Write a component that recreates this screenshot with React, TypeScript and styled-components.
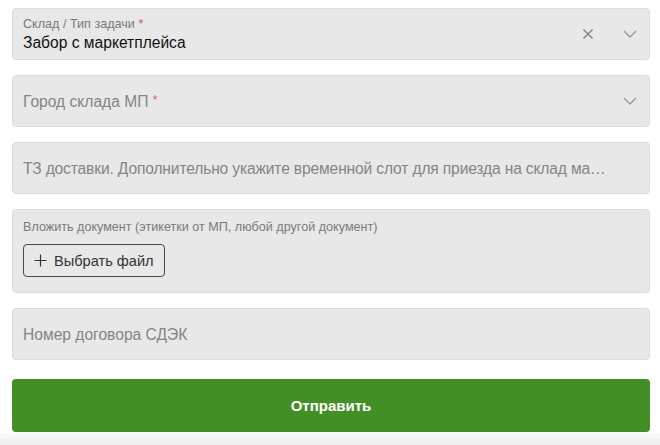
import React from "react";
import styled, { createGlobalStyle } from "styled-components";

const Global = createGlobalStyle`
  html, body { margin: 0; padding: 0; background: #fff; }
  body { font-family: "Liberation Sans", Arial, sans-serif; }
  * { box-sizing: border-box; }
`;

const Page = styled.div`
  width: 660px;
  height: 445px;
  display: flex;
  flex-direction: column;
  overflow: hidden;
`;

const Form = styled.form`
  display: flex;
  flex-direction: column;
  gap: 15px;
  padding: 8px 10px 0 12px;
`;

const Field = styled.div<{ $tall?: boolean }>`
  position: relative;
  height: ${(p) => (p.$tall ? "84px" : "52px")};
  background: #e8e8e8;
  border: 1px solid #dcdcdc;
  border-radius: 4px;
  display: flex;
  flex-direction: column;
  justify-content: ${(p) => (p.$tall ? "flex-start" : "center")};
  padding: ${(p) => (p.$tall ? "10px 10px 0 10px" : "0 40px 0 10px")};
`;

const Label = styled.div`
  font-size: 12.6px;
  line-height: 15px;
  color: #7a7a7a;
`;

const Star = styled.span<{ $small?: boolean }>`
  color: #e0534f;
  font-size: ${(p) => (p.$small ? "12px" : "inherit")};
  vertical-align: ${(p) => (p.$small ? "3px" : "baseline")};
`;

const Value = styled.div`
  font-size: 15.6px;
  line-height: 19px;
  color: #111;
  margin-top: 1px;
`;

const Placeholder = styled.div<{ $tight?: boolean }>`
  font-size: 15.6px;
  line-height: 19px;
  color: #858585;
  white-space: nowrap;
  letter-spacing: ${(p) => (p.$tight ? "-0.15px" : "0")};
`;

const Icons = styled.div`
  position: absolute;
  right: 12px;
  top: 0;
  bottom: 0;
  display: flex;
  align-items: center;
  gap: 29px;
`;

const FileButton = styled.button`
  margin-top: 9px;
  align-self: flex-start;
  height: 33px;
  padding: 0 10px;
  display: flex;
  align-items: center;
  gap: 7px;
  background: transparent;
  border: 1px solid #4a4a4a;
  border-radius: 4px;
  font-family: "Liberation Sans", Arial, sans-serif;
  font-size: 14.6px;
  color: #333;
`;

const Submit = styled.button`
  margin-top: 4px;
  height: 53px;
  border: none;
  border-radius: 4px;
  background: #428f25;
  color: #fff;
  font-family: "Liberation Sans", Arial, sans-serif;
  font-weight: bold;
  font-size: 15px;
`;

const Footer = styled.div`
  margin-top: auto;
  height: 12px;
  background: linear-gradient(#fafafa, #ededed);
`;

const Cross = () => (
  <svg width="12" height="12" viewBox="0 0 12 12">
    <path d="M1.5 1.5 L10.5 10.5 M10.5 1.5 L1.5 10.5" stroke="#8a8a8a" strokeWidth="1.6" />
  </svg>
);

const Chevron = () => (
  <svg width="14" height="8" viewBox="0 0 14 8">
    <path d="M1 1 L7 7 L13 1" stroke="#999" strokeWidth="1.4" fill="none" />
  </svg>
);

const Plus = () => (
  <svg width="13" height="13" viewBox="0 0 13 13">
    <path d="M6.5 0.5 V12.5 M0.5 6.5 H12.5" stroke="#333" strokeWidth="1.2" />
  </svg>
);

export default function App() {
  return (
    <Page>
      <Global />
      <Form onSubmit={(e) => e.preventDefault()}>
        <Field>
          <Label>
            Склад / Тип задачи <Star>*</Star>
          </Label>
          <Value>Забор с маркетплейса</Value>
          <Icons>
            <Cross />
            <Chevron />
          </Icons>
        </Field>
        <Field>
          <Placeholder>
            Город склада МП <Star $small>*</Star>
          </Placeholder>
          <Icons>
            <Chevron />
          </Icons>
        </Field>
        <Field>
          <Placeholder $tight>
            ТЗ доставки. Дополнительно укажите временной слот для приезда на склад ма…
          </Placeholder>
        </Field>
        <Field $tall>
          <Label>Вложить документ (этикетки от МП, любой другой документ)</Label>
          <FileButton type="button">
            <Plus />
            Выбрать файл
          </FileButton>
        </Field>
        <Field>
          <Placeholder>Номер договора СДЭК</Placeholder>
        </Field>
        <Submit type="submit">Отправить</Submit>
      </Form>
      <Footer />
    </Page>
  );
}
